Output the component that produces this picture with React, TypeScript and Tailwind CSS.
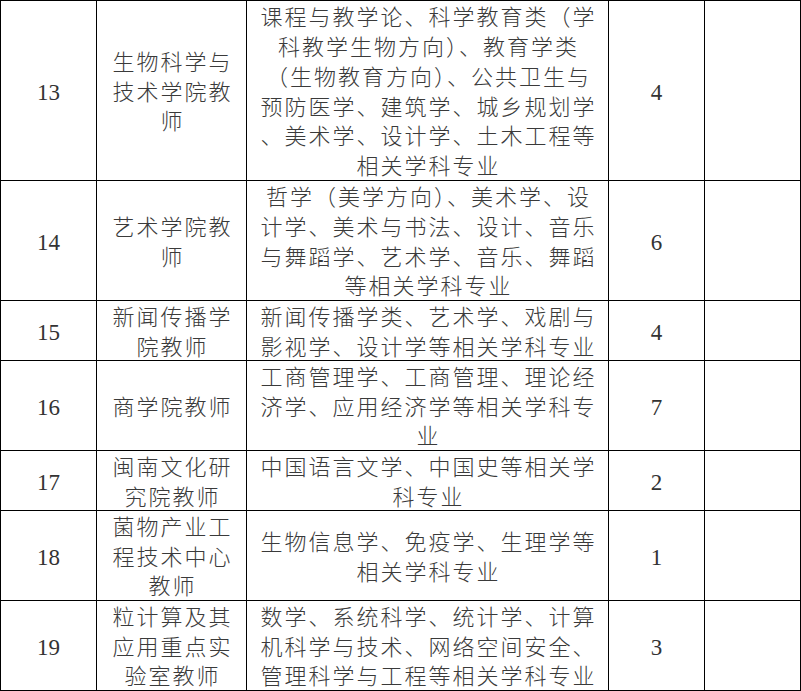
import React from "react";

type Row = { n: string; dept: string[]; major: string[]; count: string; h: string };

const rows: Row[] = [
  {
    n: "13",
    dept: ["生物科学与", "技术学院教", "师"],
    major: [
      "课程与教学论、科学教育类（学",
      "科教学生物方向）、教育学类",
      "（生物教育方向）、公共卫生与",
      "预防医学、建筑学、城乡规划学",
      "、美术学、设计学、土木工程等",
      "相关学科专业",
    ],
    count: "4",
    h: "h-[179px]",
  },
  {
    n: "14",
    dept: ["艺术学院教", "师"],
    major: [
      "哲学（美学方向）、美术学、设",
      "计学、美术与书法、设计、音乐",
      "与舞蹈学、艺术学、音乐、舞蹈",
      "等相关学科专业",
    ],
    count: "6",
    h: "h-[119px]",
  },
  {
    n: "15",
    dept: ["新闻传播学", "院教师"],
    major: ["新闻传播学类、艺术学、戏剧与", "影视学、设计学等相关学科专业"],
    count: "4",
    h: "h-[59px]",
  },
  {
    n: "16",
    dept: ["商学院教师"],
    major: ["工商管理学、工商管理、理论经", "济学、应用经济学等相关学科专", "业"],
    count: "7",
    h: "h-[89px]",
  },
  {
    n: "17",
    dept: ["闽南文化研", "究院教师"],
    major: ["中国语言文学、中国史等相关学", "科专业"],
    count: "2",
    h: "h-[59px]",
  },
  {
    n: "18",
    dept: ["菌物产业工", "程技术中心", "教师"],
    major: ["生物信息学、免疫学、生理学等", "相关学科专业"],
    count: "1",
    h: "h-[89px]",
  },
  {
    n: "19",
    dept: ["粒计算及其", "应用重点实", "验室教师"],
    major: [
      "数学、系统科学、统计学、计算",
      "机科学与技术、网络空间安全、",
      "管理科学与工程等相关学科专业",
    ],
    count: "3",
    h: "h-[89px]",
  },
];

const cjk =
  "font-['Noto_Sans_CJK_SC','Noto_Sans_CJK_JP',sans-serif] text-[22px] leading-[29.8px] tracking-[2px] text-[#3a3a3a] font-light";
const num = "font-['Liberation_Serif',serif] text-[23px] text-[#333]";

function Lines({ lines }: { lines: string[] }) {
  return (
    <div className="flex flex-col items-center pl-[2px]">
      {lines.map((l, i) => (
        <div key={i} className="whitespace-nowrap">
          {l}
        </div>
      ))}
    </div>
  );
}

export default function App() {
  return (
    <div className="w-[801px] h-[691px] bg-white overflow-hidden">
      <div className="grid grid-cols-[95px_149px_361px_95px_95px] gap-px bg-black p-px w-[801px]">
        {rows.map((r) => (
          <React.Fragment key={r.n}>
            <div className={`bg-white ${r.h} flex items-center justify-center pt-[6px] ${num}`}>{r.n}</div>
            <div className={`bg-white ${r.h} flex items-center justify-center ${cjk}`}>
              <Lines lines={r.dept} />
            </div>
            <div className={`bg-white ${r.h} flex items-center justify-center ${cjk}`}>
              <Lines lines={r.major} />
            </div>
            <div className={`bg-white ${r.h} flex items-center justify-center pt-[6px] ${num}`}>{r.count}</div>
            <div className={`bg-white ${r.h}`}></div>
          </React.Fragment>
        ))}
      </div>
    </div>
  );
}
